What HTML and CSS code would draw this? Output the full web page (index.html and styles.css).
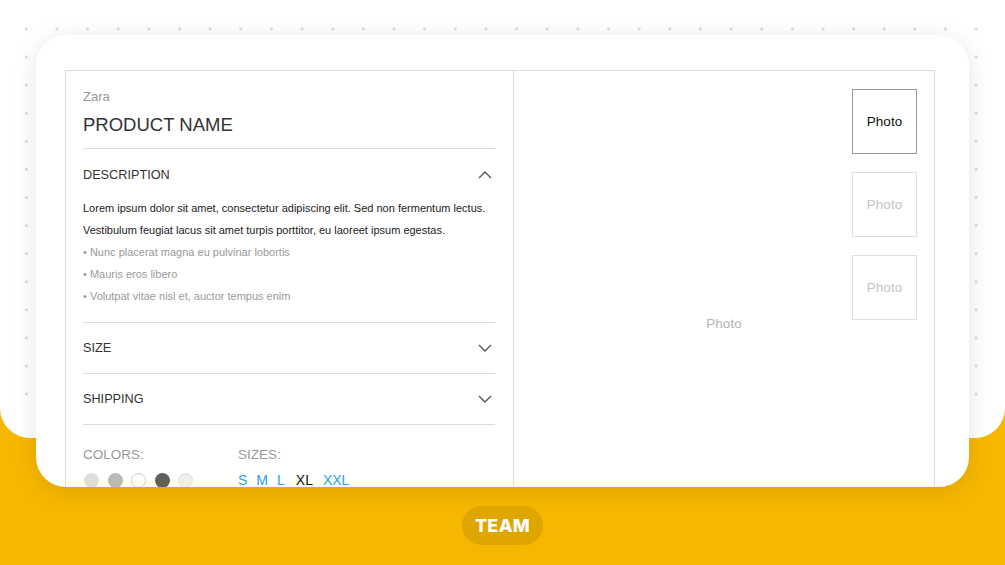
FILE: index.html
```html
<!DOCTYPE html>
<html lang="en">
<head>
    <meta charset="UTF-8">
    <meta name="viewport" content="width=device-width, initial-scale=1.0">
    <title>Product page wireframe</title>
    <link rel="stylesheet" href="styles.css">
</head>
<body>
    <div class="backdrop"><div class="dots"></div></div>

    <main class="stage">
        <section class="card">
            <div class="frame">
                <div class="info">
                    <div class="title-block">
                        <p class="brand">Zara</p>
                        <h1 class="product-name">PRODUCT NAME</h1>
                    </div>

                    <div class="accordion open">
                        <div class="acc-head">
                            <span>DESCRIPTION</span>
                            <svg class="chevron" width="14" height="8" viewBox="0 0 14 8"><path d="M1 7 L7 1 L13 7" /></svg>
                        </div>
                        <div class="acc-body">
                            <p>Lorem ipsum dolor sit amet, consectetur adipiscing elit. Sed non fermentum lectus.</p>
                            <p>Vestibulum feugiat lacus sit amet turpis porttitor, eu laoreet ipsum egestas.</p>
                            <p class="bullet">• Nunc placerat magna eu pulvinar lobortis</p>
                            <p class="bullet">• Mauris eros libero</p>
                            <p class="bullet">• Volutpat vitae nisl et, auctor tempus enim</p>
                        </div>
                    </div>

                    <div class="accordion">
                        <div class="acc-head">
                            <span>SIZE</span>
                            <svg class="chevron" width="14" height="8" viewBox="0 0 14 8"><path d="M1 1 L7 7 L13 1" /></svg>
                        </div>
                    </div>

                    <div class="accordion">
                        <div class="acc-head">
                            <span>SHIPPING</span>
                            <svg class="chevron" width="14" height="8" viewBox="0 0 14 8"><path d="M1 1 L7 7 L13 1" /></svg>
                        </div>
                    </div>

                    <div class="options">
                        <div class="option colors">
                            <p class="option-label">COLORS:</p>
                            <div class="swatches">
                                <span class="swatch c1"></span>
                                <span class="swatch c2"></span>
                                <span class="swatch c3"></span>
                                <span class="swatch c4"></span>
                                <span class="swatch c5"></span>
                            </div>
                        </div>
                        <div class="option sizes">
                            <p class="option-label">SIZES:</p>
                            <div class="size-list">
                                <span>S</span>
                                <span>M</span>
                                <span>L</span>
                                <span class="active">XL</span>
                                <span>XXL</span>
                            </div>
                        </div>
                    </div>
                </div>

                <div class="gallery">
                    <div class="main-photo">Photo</div>
                    <div class="thumbs">
                        <div class="thumb selected">Photo</div>
                        <div class="thumb">Photo</div>
                        <div class="thumb">Photo</div>
                    </div>
                </div>
            </div>
        </section>

        <div class="badge">TEAM</div>
    </main>
</body>
</html>
```

FILE: styles.css
```css
html, body {
    margin: 0;
    padding: 0;
}
body {
    height: 565px;
    overflow: hidden;
    position: relative;
    background-color: #f6b700;
    font-family: "Liberation Sans", Arial, sans-serif;
}
p, h1 {
    margin: 0;
}

/* white top area with dotted grid */
.backdrop {
    position: absolute;
    top: 0;
    left: 0;
    right: 0;
    height: 438px;
    background: #ffffff;
    border-radius: 0 0 30px 30px;
}
.backdrop .dots {
    position: absolute;
    left: 10.7px;
    top: 15px;
    width: 981px;
    height: 394px;
    background-image: radial-gradient(circle, #dadada 1.2px, transparent 1.7px);
    background-size: 30.65px 28.08px;
}

.stage {
    position: relative;
    padding: 35px 36px 0;
}
.card {
    height: 452px;
    background: #ffffff;
    border-radius: 30px;
    overflow: hidden;
    padding: 35px 34px 0 29px;
    box-sizing: border-box;
    box-shadow: 0 4px 24px rgba(0, 0, 0, 0.10);
}
.frame {
    display: grid;
    grid-template-columns: 448px 1fr;
    height: 504px;
    border: 1px solid #dcdcdc;
}

/* left column */
.info {
    border-right: 1px solid #dcdcdc;
    padding: 17px 18px 0 17px;
}
.title-block {
    border-bottom: 1px solid #dcdcdc;
    padding-bottom: 11px;
}
.brand {
    font-size: 13px;
    line-height: 18px;
    color: #999999;
}
.product-name {
    margin-top: 7px;
    font-size: 18.5px;
    line-height: 24px;
    font-weight: normal;
    color: #333333;
}
.accordion {
    border-bottom: 1px solid #dcdcdc;
}
.acc-head {
    display: flex;
    justify-content: space-between;
    align-items: center;
    padding: 17px 3px 17px 0;
    font-size: 12.7px;
    line-height: 16px;
    color: #333333;
}
.accordion.open .acc-head {
    padding: 18px 3px 14px 0;
}
.chevron path {
    fill: none;
    stroke: #555555;
    stroke-width: 1.4;
}
.acc-body {
    padding-bottom: 15px;
    font-size: 11px;
    line-height: 22px;
    color: #222222;
}
.acc-body .bullet {
    color: #9a9a9a;
}

.options {
    display: flex;
    padding-top: 22px;
}
.option-label {
    font-size: 13.5px;
    line-height: 16px;
    color: #999999;
}
.colors {
    width: 155px;
}
.swatches {
    display: flex;
    gap: 8.5px;
    margin-top: 10px;
    padding-left: 1px;
}
.swatch {
    width: 15px;
    height: 15px;
    border-radius: 50%;
    box-sizing: border-box;
}
.c1 { background: #dddddd; }
.c2 { background: #b9b9b9; }
.c3 { background: #ffffff; border: 1px solid #cccccc; }
.c4 { background: #606060; }
.c5 { background: #eeeeee; border: 1px solid #dddddd; }
.size-list {
    display: flex;
    gap: 9px;
    margin-top: 9px;
    font-size: 14px;
    line-height: 16px;
    color: #2a9df4;
}
.size-list .active {
    color: #111111;
    margin: 0 1px 0 2px;
}

/* right column */
.gallery {
    position: relative;
    display: flex;
    justify-content: center;
    align-items: center;
}
.main-photo {
    font-size: 13.5px;
    color: #b5b5b5;
}
.thumbs {
    position: absolute;
    top: 18px;
    right: 17px;
    display: flex;
    flex-direction: column;
    gap: 18px;
}
.thumb {
    width: 65px;
    height: 65px;
    box-sizing: border-box;
    border: 1.5px solid #e0e0e0;
    display: flex;
    justify-content: center;
    align-items: center;
    font-size: 13.5px;
    color: #c4c4c4;
}
.thumb.selected {
    border-color: #9a9a9a;
    color: #111111;
}

.badge {
    width: 81px;
    height: 39px;
    margin: 19px auto 0;
    border-radius: 20px;
    background: #e0a600;
    color: #ffffff;
    font-family: Inter, "Open Sans", sans-serif;
    font-weight: 800;
    font-size: 18px;
    letter-spacing: 0.3px;
    display: flex;
    justify-content: center;
    align-items: center;
}
```
